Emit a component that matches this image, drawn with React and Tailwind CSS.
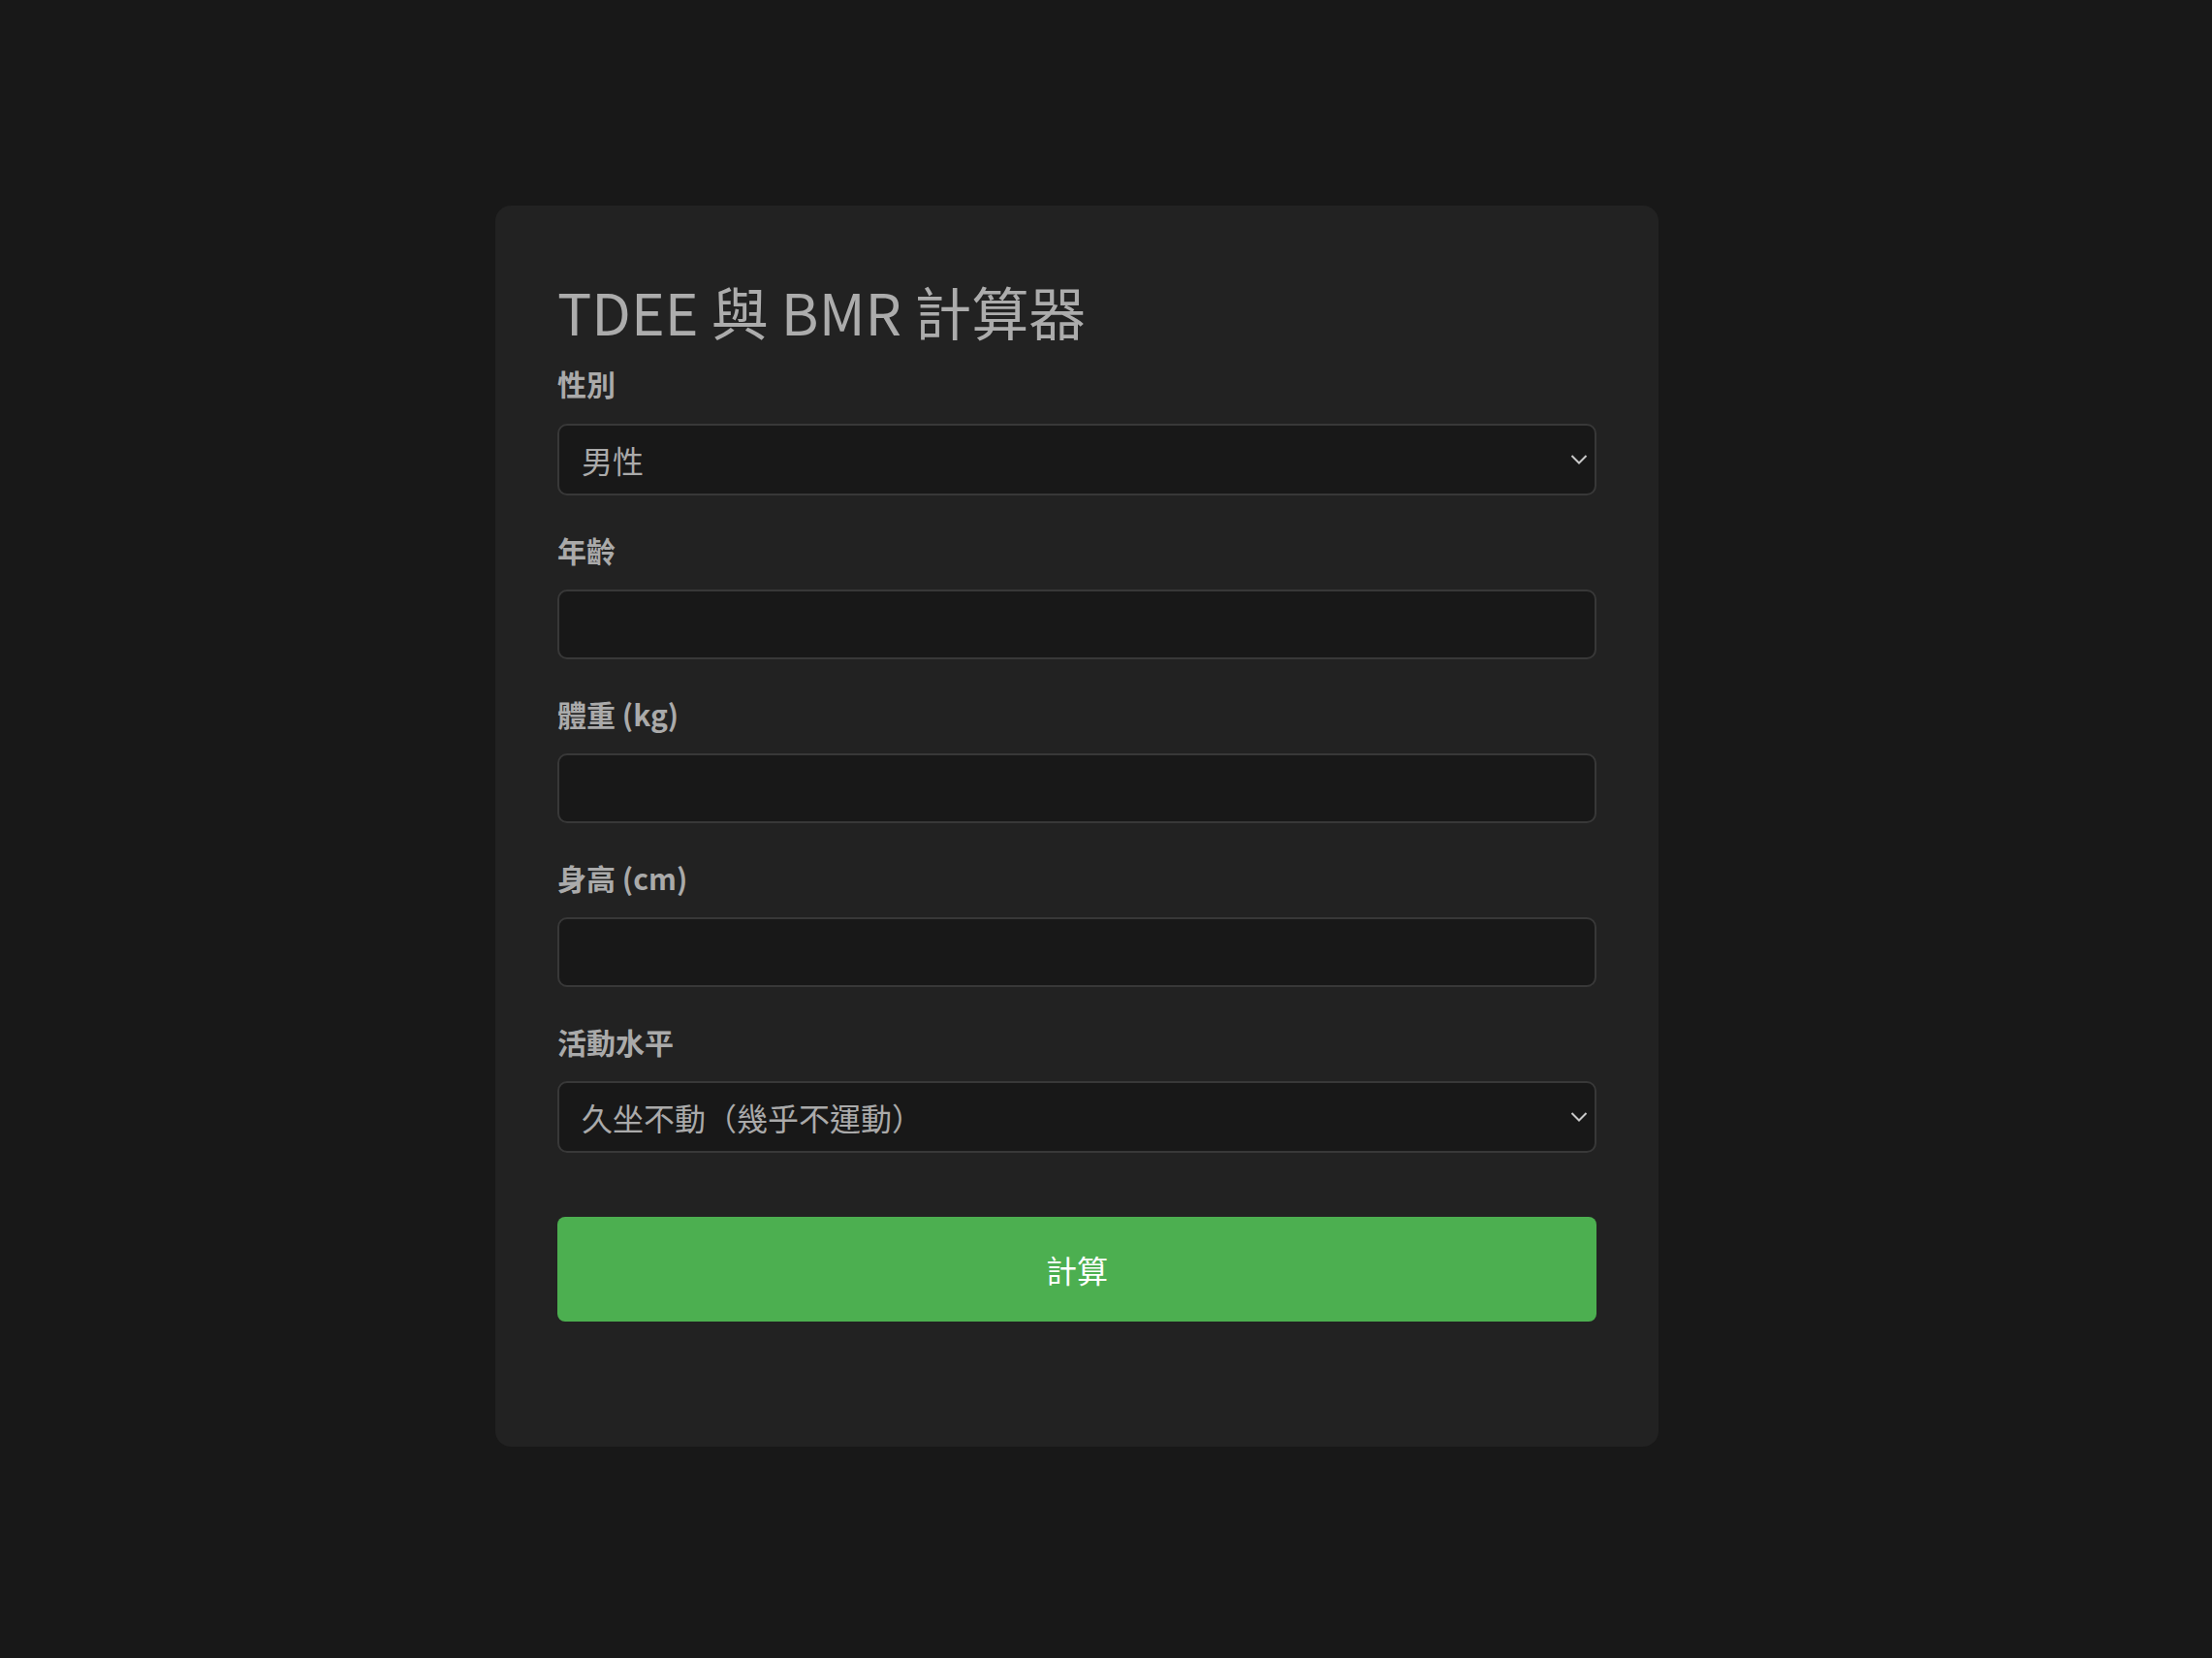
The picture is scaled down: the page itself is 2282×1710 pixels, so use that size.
import React, { useState } from "react";

const fields = [
  { id: "age", label: "年齡" },
  { id: "weight", label: "體重 (kg)" },
  { id: "height", label: "身高 (cm)" },
];

const Chevron = () => (
  <svg
    className="pointer-events-none absolute right-[9px] top-1/2 -translate-y-1/2"
    width="18"
    height="11"
    viewBox="0 0 18 11"
    fill="none"
  >
    <path d="M1.5 1.5 L9 9 L16.5 1.5" stroke="#c8c8c8" strokeWidth="2" />
  </svg>
);

const Select = ({ value, onChange, options }) => (
  <div className="relative">
    <select
      value={value}
      onChange={onChange}
      className="block h-[74px] w-full appearance-none rounded-[10px] border-2 border-[#383838] bg-[#181818] pl-[23px] pr-[40px] text-[32px] text-[#aaaaaa] outline-none"
    >
      {options.map((o) => (
        <option key={o} value={o}>
          {o}
        </option>
      ))}
    </select>
    <Chevron />
  </div>
);

const App = () => {
  const [gender, setGender] = useState("男性");
  const [activity, setActivity] = useState("久坐不動（幾乎不運動）");
  const [values, setValues] = useState({ age: "", weight: "", height: "" });

  const inputHandler = (e) => {
    setValues({ ...values, [e.target.name]: e.target.value });
  };

  return (
    <div className="min-h-screen bg-[#181818] pl-[511px] pt-[212px] font-['Noto_Sans_CJK_TC','Noto_Sans',sans-serif]">
      <div className="w-[1200px] rounded-[16px] bg-[#222222] px-[64px] pb-[129px] pt-[64px]">
        <h1 className="text-[59px] font-normal leading-[90px] text-[#acacac]">
          TDEE 與 BMR 計算器
        </h1>

        {/* gender */}
        <label className="mt-[9px] mb-[22px] block text-[30px] font-bold leading-[40px] text-[#aaaaaa]">
          性別
        </label>
        <Select
          value={gender}
          onChange={(e) => setGender(e.target.value)}
          options={["男性", "女性"]}
        />

        {fields.map((f) => (
          <div key={f.id}>
            <label className="mt-[36px] mb-[21px] block text-[30px] font-bold leading-[40px] text-[#aaaaaa]">
              {f.label}
            </label>
            <input
              type="number"
              name={f.id}
              value={values[f.id]}
              onChange={inputHandler}
              className="block h-[72px] w-full rounded-[10px] border-2 border-[#383838] bg-[#181818] px-[23px] text-[32px] text-[#aaaaaa] outline-none"
            />
          </div>
        ))}

        {/* activity level */}
        <label className="mt-[36px] mb-[21px] block text-[30px] font-bold leading-[40px] text-[#aaaaaa]">
          活動水平
        </label>
        <Select
          value={activity}
          onChange={(e) => setActivity(e.target.value)}
          options={[
            "久坐不動（幾乎不運動）",
            "輕度活動（每週運動1-3天）",
            "中度活動（每週運動3-5天）",
            "高度活動（每週運動6-7天）",
            "非常高度活動（體力工作或每天訓練）",
          ]}
        />

        <button className="mt-[66px] block h-[108px] w-full rounded-[8px] bg-[#4caf50] text-[32px] text-white">
          計算
        </button>
      </div>
    </div>
  );
};

export default App;
